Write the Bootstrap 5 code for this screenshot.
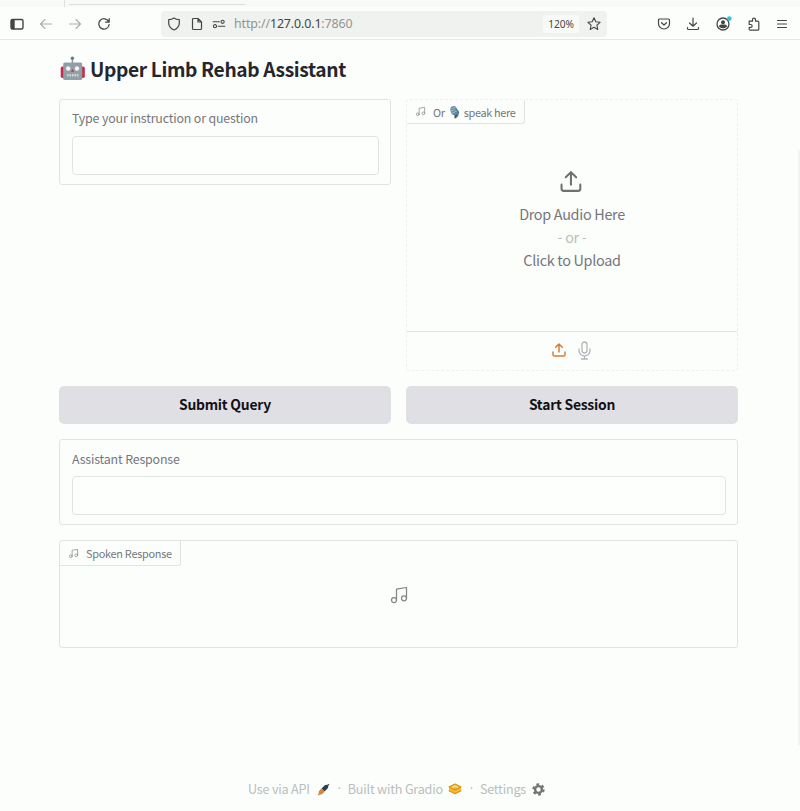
<!DOCTYPE html>
<html lang="en">
<head>
<meta charset="utf-8">
<meta name="viewport" content="width=device-width, initial-scale=1">
<title>Upper Limb Rehab Assistant</title>
<link href="https://cdn.jsdelivr.net/npm/bootstrap@5.3.0/dist/css/bootstrap.min.css" rel="stylesheet">
<style>
body{background:#fcfefc;font-family:"Noto Sans CJK SC","Noto Sans",sans-serif;color:#75767b;height:811px;overflow:hidden}
svg{display:block;flex:none;fill:none;stroke-linecap:round;stroke-linejoin:round}
svg:not([stroke]){stroke:currentColor}
.chrome{height:40px;border-bottom:1px solid #e5e7e5;color:#444645;font-family:"Noto Sans",sans-serif}
.tabstrip{height:7px;background:#f8faf8}
.tab-start{width:65px;border-right:1px solid #dfe1df}
.tab-open{width:176px;margin-left:4px;height:5px;border-bottom:1px solid #dddfdd}
.toolbar-row{height:33px;padding-left:9px;padding-right:12px}
.ico-back{color:#aaacaa;margin-left:15px}
.ico-fwd{color:#aaacaa;margin-left:17px}
.ico-reload{margin-left:17px}
.addr{width:446px;height:26px;background:#f0f2f0;border-radius:4px;margin-left:51px;padding:0 5px 0 5px;font-size:12.4px;letter-spacing:-.12px}
.addr .proto{color:#929492}
.addr .url{padding-top:1px}
.addr .gap-icon{margin-left:7px}
.zoomlvl{background:#f8faf8;border-radius:3px;width:36px;height:18px;line-height:18px;font-size:10.2px;text-align:center}
.tools{width:131px}
.app{width:679px;margin-left:59px}
.title-row{height:59px;color:#25262b;padding-bottom:2px}
.title-row h1{font-size:19.2px;font-weight:700;line-height:28px;letter-spacing:-.36px;margin-left:4px}
.pane{border:1px solid #e2e4e3;border-radius:3px}
.field{height:86px;padding:6px 11px 0 12px}
.field label{font-size:12.4px;line-height:24px;height:30px;display:block;letter-spacing:-.16px}
.field input{height:39px;border:1px solid #e2e4e3;border-radius:4px;background:#fdfffd;padding:0}
.field.reply label{padding-top:1px}
.halves{display:grid;grid-template-columns:1fr 1fr;column-gap:15px}
.stack-gap{margin-top:15px}
.audio{height:272px;border:1px dashed #eff1ef;border-radius:4px}
.tag{border:1px solid #e2e4e3;border-top:0;border-left:0;border-radius:0 0 3px 0;height:25px;font-size:10.9px;line-height:25px;width:max-content;letter-spacing:-.27px}
.audio .tag{height:24px;line-height:24px;letter-spacing:-.32px}
.tag .note-sm{color:#929492;margin-right:7px}
.tag .mic-art{margin:0 4px 0 4px}
.drop{height:207px;padding-top:45px;font-size:14.4px;line-height:23px;letter-spacing:-.3px}
.drop svg{margin-bottom:8px;color:#70726f}
.drop .or{color:#bbbdbb}
.sources{height:39px;border-top:1px solid #dfe1df;gap:11px;padding-right:3px;padding-bottom:2px}
.src-up{color:#d7793a}
.src-mic{color:#b3b4b9}
.action,.action:hover{height:38px;background:#e0dfe4;border:0;border-radius:5px;color:#111116;font-size:13.9px;font-weight:700;line-height:22px;padding:0 0 2px;letter-spacing:-.24px}
.spoken{height:108px}
.spoken .note-lg{margin-top:19px;color:#858785}
.foot{margin-top:129px;color:#bbbdbb;font-size:12.6px;line-height:24px;padding-left:189px;letter-spacing:-.2px}
.foot .dot{font-family:"Noto Sans",sans-serif;width:17px;text-align:center}
.foot .api{margin:0 1px 0 7px}
.foot .gr{margin-left:5px;margin-right:1px}
.foot .cog{margin-left:6px;color:#727472}
.scroll-edge{width:2px;height:595px;right:0;top:150px;background:#f3f3f4}
</style>
</head>
<body>
<svg width="0" height="0" class="position-absolute"><defs>
<g id="note"><path d="M9 18V5l12-2v13"/><circle cx="6" cy="18" r="3"/><circle cx="18" cy="16" r="3"/></g>
<g id="upload"><path d="M21 15v4a2 2 0 0 1-2 2H5a2 2 0 0 1-2-2v-4M17 8l-5-5-5 5M12 3v12"/></g>
</defs></svg>
<header class="chrome">
  <div class="tabstrip d-flex"><div class="tab-start"></div><div class="tab-open"></div></div>
  <nav class="toolbar-row d-flex align-items-center">
    <svg width="16" height="16" viewBox="0 0 16 16" stroke-width="1.4"><rect x="2" y="3.5" width="12" height="9.500" rx="1.500"/><path d="M2.700 4h2.300v8.600H2.700z" fill="currentColor"/></svg>
    <svg class="ico-back" width="12" height="12" viewBox="0 0 12 12" stroke-width="1.1"><path d="M11.500 6H.7M5 1.500.5 6 5 10.500"/></svg>
    <svg class="ico-fwd" width="12" height="12" viewBox="0 0 12 12" stroke-width="1.1"><path d="M.5 6h10.800M7 1.500 11.500 6 7 10.500"/></svg>
    <svg class="ico-reload" width="12" height="12" viewBox="0 0 12 12" stroke-width="1.25"><path d="M10.700 3.600A5.200 5.200 0 1 0 11.200 6.500M11.200.7v3.500H7.500"/></svg>
    <div class="addr d-flex align-items-center">
      <svg width="16" height="16" viewBox="0 0 16 16" stroke-width="1.2"><path d="M8 2c1.500 1.200 3.400 1.700 5.300 1.700V7c0 3.200-2.200 5.700-5.300 7-3.100-1.300-5.300-3.800-5.300-7V3.700C4.600 3.700 6.500 3.200 8 2z"/></svg>
      <svg class="gap-icon" width="16" height="16" viewBox="0 0 16 16" stroke-width="1.2"><path d="M4.500 2.500H9L12.500 6v6.500a1 1 0 0 1-1 1h-7a1 1 0 0 1-1-1v-9a1 1 0 0 1 1-1zM9 2.700V6h3.300"/></svg>
      <svg class="gap-icon" width="14" height="14" viewBox="0 0 14 14" stroke-width="1.1"><path d="M1.200 4.800h6.200M6.300 9.200h6.500"/><circle cx="10.600" cy="4.800" r="1.600"/><circle cx="3" cy="9.200" r="1.600"/></svg>
      <span class="url ms-2 text-nowrap"><span class="proto">http://</span>127.0.0.1<span class="proto">:7860</span></span>
      <span class="zoomlvl ms-auto">120%</span>
      <svg class="gap-icon" width="16" height="16" viewBox="0 0 16 16" stroke-width="1.1"><path d="m8 1.800 1.800 4 4.300.5-3.200 2.900.9 4.300L8 11.300l-3.800 2.200.9-4.300-3.200-2.900 4.300-.5z"/></svg>
    </div>
    <div class="tools d-flex align-items-center justify-content-between ms-auto">
      <svg width="14" height="14" viewBox="0 0 14 14" stroke-width="1.2"><path d="M2.500 2h9a1 1 0 0 1 1 1v3.500a5.500 5.500 0 0 1-11 0V3a1 1 0 0 1 1-1zM4.500 5.700 7 8l2.500-2.300"/></svg>
      <svg width="14" height="14" viewBox="0 0 14 14" stroke-width="1.2"><path d="M7 1v8M3.500 6 7 9.200 10.500 6M1.500 10.500v1a1 1 0 0 0 1 1h9a1 1 0 0 0 1-1v-1"/></svg>
      <svg width="18" height="16" viewBox="0 0 18 16" stroke-width="1.3"><circle cx="8" cy="8" r="6"/><g fill="currentColor" stroke="none"><circle cx="8" cy="6.200" r="2"/><path d="M4.200 10.200c0-1.500 1.200-1.700 3.800-1.700s3.800.2 3.800 1.700C11 11.700 9.700 12.300 8 12.300s-3-.6-3.800-2.100z"/></g><circle cx="14.300" cy="2.600" r="2.300" fill="#31bfe8" stroke="none"/></svg>
      <svg width="14" height="14" viewBox="0 0 14 14" stroke-width="1.2"><path d="M2.200 4.200h3.300V2.700a1.500 1.500 0 0 1 3 0v1.500h2.300a1 1 0 0 1 1 1v7a1 1 0 0 1-1 1H3.200a1 1 0 0 1-1-1v-1.800h1.500a1.400 1.400 0 0 0 0-2.900H2.200z"/></svg>
      <svg width="12" height="12" viewBox="0 0 12 12" stroke-width="1.1"><path d="M1.500 2.500h9M1.500 6h9M1.500 9.500h9"/></svg>
    </div>
  </nav>
</header>
<main class="app">
  <div class="title-row d-flex align-items-center">
    <svg width="27" height="25" viewBox="0 0 27 25" stroke="none"><path d="M12.700 3h1.400v5h-1.400z" fill="#8d979d"/><circle cx="13.400" cy="2.200" r="1.700" fill="#75757b"/><rect x="1.700" y="10.500" width="5" height="11.500" rx="1.800" fill="#c22d4c"/><rect x="20.800" y="10.500" width="5" height="11.500" rx="1.800" fill="#c22d4c"/><rect x="4.200" y="6.500" width="19" height="17.500" rx="1.500" fill="#91a0a7"/><circle cx="9.200" cy="12.500" r="2.200" fill="#f7f5f4"/><circle cx="18" cy="12.500" r="2.200" fill="#f7f5f4"/><path d="m13.500 13 1.500 2.800h-3z" fill="#bb344d"/><rect x="8" y="18" width="11.500" height="2.600" rx=".8" fill="#cfd7da"/><path d="M10 18v2.600m2.500-2.600v2.600m2.500-2.600v2.600m2.500-2.600v2.600" stroke="#7d8a91" stroke-width=".6"/></svg>
    <h1 class="mb-0 text-nowrap">Upper Limb Rehab Assistant</h1>
  </div>
  <section class="halves">
    <div><div class="pane field"><label for="q">Type your instruction or question</label><input id="q" class="form-control shadow-none"></div></div>
    <div class="audio">
      <div class="tag d-flex align-items-center px-2"><svg class="note-sm" width="11" height="11" viewBox="0 0 24 24" stroke-width="1.8"><use href="#note"/></svg><span>Or</span><svg class="mic-art" width="11" height="14" viewBox="0 0 11 14" stroke="none"><path d="m5 5 4 2-1.500 6-2 .5z" fill="#4f5a62"/><rect x="1.500" y="1" width="6.500" height="9" rx="3.200" fill="#68899d" transform="rotate(-15 5 5)"/><path d="m2 4 5-2M2.300 6l5-2M3 8l5-2" stroke="#b8d0dc" stroke-width=".7"/><path d="m7 4 2.500 3-1 4" stroke="#347da1" stroke-width="1.3"/></svg><span>speak here</span></div>
      <div class="drop text-center">
        <svg class="mx-auto" width="25" height="25" viewBox="1.5 0 24 24" stroke-width="2"><use href="#upload"/></svg>
        <div>Drop Audio Here</div><div class="or">- or -</div><div>Click to Upload</div>
      </div>
      <div class="sources d-flex align-items-center justify-content-center">
        <svg class="src-up" width="16" height="16" viewBox="0 0 24 24" stroke-width="2.2"><use href="#upload"/></svg>
        <svg class="src-mic" width="13" height="19" viewBox="0 0 13 19" stroke-width="1.3"><rect x="4" y="1" width="5" height="11" rx="2.500"/><path d="M1 8v1.500a5.500 5.500 0 0 0 11 0V8M6.500 15v3M3.500 18h6"/></svg>
      </div>
    </div>
  </section>
  <div class="halves stack-gap"><button class="btn action">Submit Query</button><button class="btn action">Start Session</button></div>
  <div class="pane field reply stack-gap"><label for="r">Assistant Response</label><input id="r" class="form-control shadow-none"></div>
  <section class="pane spoken stack-gap">
    <div class="tag d-flex align-items-center px-2"><svg class="note-sm" width="11" height="11" viewBox="0 0 24 24" stroke-width="1.8"><use href="#note"/></svg><span>Spoken Response</span></div>
    <svg class="note-lg mx-auto" width="20" height="20" viewBox="0 0 24 24" stroke-width="1.5"><use href="#note"/></svg>
  </section>
  <footer class="foot d-flex align-items-center text-nowrap">
    <span>Use via API</span>
    <svg class="api" width="13" height="13" viewBox="0 0 13 13" stroke="none"><path d="M4.500 5.500 8 2l2.500-.2L12 .8l.4.5-1 1.300L11 5 7.500 8.500z" fill="#343d4b"/><path d="m4.300 5.600 3.200 3.200-2.500 2.500-2.600.4-1 .8-.7-.7.8-1 .4-2.500z" fill="#d88535"/></svg>
    <span class="dot">·</span><span>Built with Gradio</span>
    <svg class="gr" width="14" height="12" viewBox="0 0 14 12" stroke="none"><path d="m1 4 6-3 6 3v4l-6 3-6-3z" fill="#f3bb35"/><path d="m1 4 6-3 6 3-6 3zM1 7.800l6 3 6-3" fill="none" stroke="#dc9415" stroke-width="1.2"/><path d="m4.500 4.200 2.500-1.200 2.500 1.200" fill="none" stroke="#fff0bc"/></svg>
    <span class="dot">·</span><span>Settings</span>
    <svg class="cog" width="13" height="13" viewBox="0 0 13 13"><circle cx="6.500" cy="6.500" r="3.400" stroke-width="2.4"/><circle cx="6.500" cy="6.500" r="5.200" stroke-width="2" stroke-linecap="butt" stroke-dasharray="2.720 2.720"/></svg>
  </footer>
</main>
<div class="scroll-edge position-absolute"></div>
<script src="https://cdn.jsdelivr.net/npm/bootstrap@5.3.0/dist/js/bootstrap.bundle.min.js"></script>
</body>
</html>
